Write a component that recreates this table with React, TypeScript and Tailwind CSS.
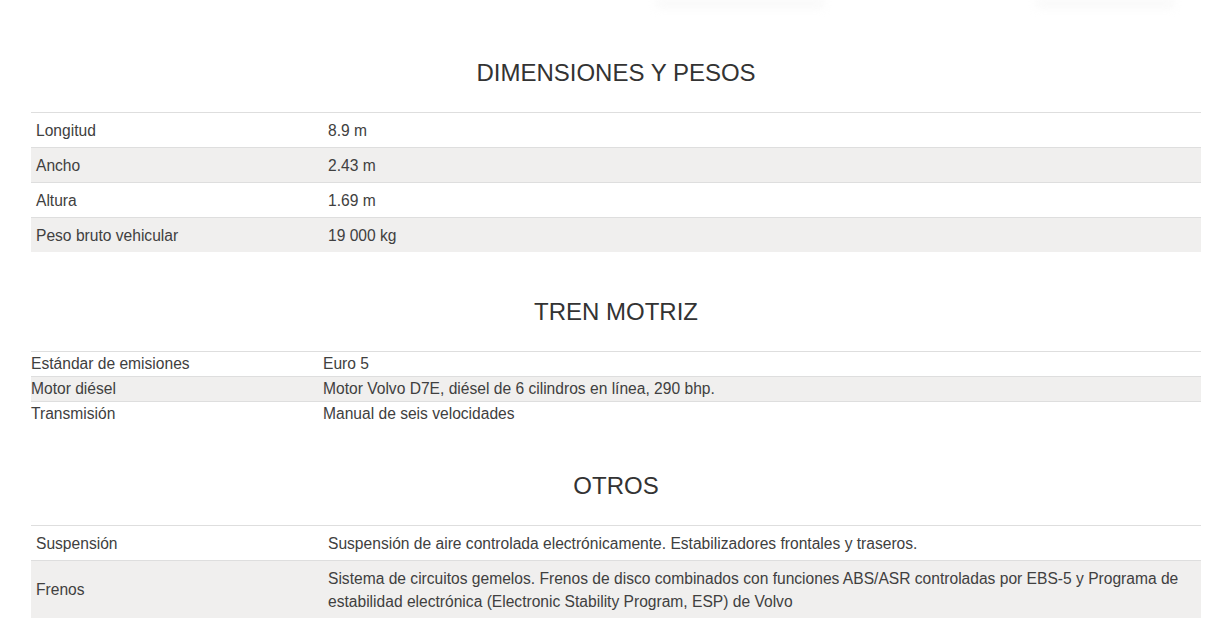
import React from "react";

type Row = { label: string; value: string };

const dimensiones: Row[] = [
  { label: "Longitud", value: "8.9 m" },
  { label: "Ancho", value: "2.43 m" },
  { label: "Altura", value: "1.69 m" },
  { label: "Peso bruto vehicular", value: "19 000 kg" },
];

const tren: Row[] = [
  { label: "Estándar de emisiones", value: "Euro 5" },
  { label: "Motor diésel", value: "Motor Volvo D7E, diésel de 6 cilindros en línea, 290 bhp." },
  { label: "Transmisión", value: "Manual de seis velocidades" },
];

const otros: Row[] = [
  { label: "Suspensión", value: "Suspensión de aire controlada electrónicamente. Estabilizadores frontales y traseros." },
  {
    label: "Frenos",
    value:
      "Sistema de circuitos gemelos. Frenos de disco combinados con funciones ABS/ASR controladas por EBS-5 y Programa de estabilidad electrónica (Electronic Stability Program, ESP) de Volvo",
  },
];

const Heading = ({ children, first }: { children: React.ReactNode; first?: boolean }) => (
  <h2 className={`text-center text-[24px] leading-[24px] text-[#333] mb-[27px] ${first ? "" : "mt-[48px]"}`}>{children}</h2>
);

const SpecTable = ({ rows, compact }: { rows: Row[]; compact?: boolean }) => (
  <div>
    {rows.map((r, i) => (
      <div
        key={r.label}
        className={`grid grid-cols-[292px_1fr] border-t border-[#dedede] items-center ${i % 2 === 1 ? "bg-[#f0efee]" : "bg-white"}`}
      >
        <div className={compact ? "h-[24px] leading-[24px]" : "px-[5px] py-[5.5px] leading-[23px]"}>{r.label}</div>
        <div className={compact ? "h-[24px] leading-[24px]" : "px-[5px] py-[5.5px] leading-[23px]"}>{r.value}</div>
      </div>
    ))}
  </div>
);

export default function App() {
  return (
    <div className="bg-white w-[1220px] h-[639px] overflow-hidden text-[15.6px] text-[#404040]" style={{ fontFamily: '"Liberation Sans", Arial, sans-serif' }}>
      <div className="flex h-[16px]">
        <div className="ml-[655px] w-[170px] h-[7px] rounded-full bg-[#eeeeee] blur-[5px] opacity-50" />
        <div className="ml-[210px] w-[140px] h-[7px] rounded-full bg-[#eeeeee] blur-[5px] opacity-50" />
      </div>
      <div className="ml-[31px] w-[1170px] pt-[45px]">
        <Heading first>DIMENSIONES Y PESOS</Heading>
        <SpecTable rows={dimensiones} />
        <Heading>TREN MOTRIZ</Heading>
        <SpecTable rows={tren} compact />
        <Heading>OTROS</Heading>
        <SpecTable rows={otros} />
      </div>
    </div>
  );
}
